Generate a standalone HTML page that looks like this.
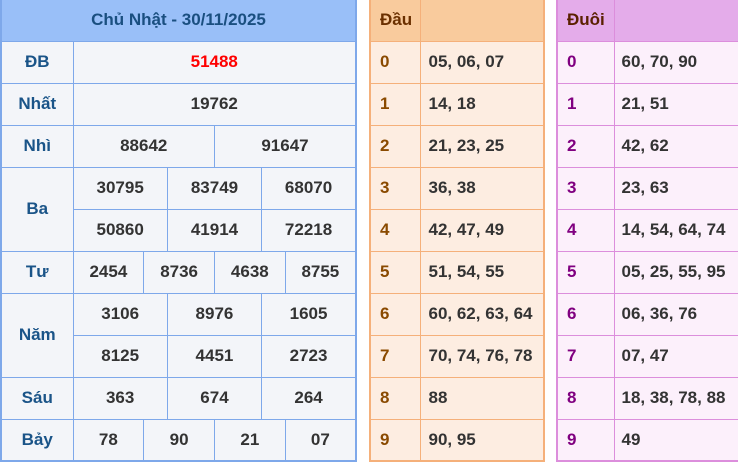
<!DOCTYPE html>
<html><head><meta charset="utf-8"><style>
*{margin:0;padding:0;box-sizing:border-box}
body{width:738px;height:461px;overflow:hidden;background:#fff;font-family:"Liberation Sans",Arial,sans-serif;font-weight:bold;font-size:17px;color:#333}
table{position:absolute;top:-2px;border-collapse:collapse;table-layout:fixed}
td{height:42px;text-align:center;vertical-align:middle;padding:0}
#L{left:0;width:357px;border:2px solid #7ea8ea}
#L td{border:1px solid #7ea8ea;background:#f3f5f9}
#L th{height:42px;background:#99bff8;color:#1a4f80;border:1px solid #7ea8ea;font-size:17px}
#L td.l{color:#1a5488}
.red{color:#f00}
#D{left:369px;width:176px;border:2px solid #f5b07a}
#D td,#D th{border:1px solid #f5b07a;background:#fdede1;text-align:left;padding-left:8px}
#D th{background:#f9cb9d;color:#6b3000;height:42px;font-size:17px}
#D td.l{color:#8a4a00;padding-left:9px}
#U{left:556px;width:200px;border:2px solid #dc8edc}
#U td,#U th{border:1px solid #dc8edc;background:#fcf0fb;text-align:left;padding-left:7px}
#U th{background:#e4acea;color:#5a2000;height:42px;font-size:17px}
#U td.l{color:#800080;padding-left:9px}
</style></head><body>
<table id="L">
<colgroup><col style="width:72px"><col span="12"></colgroup>
<tr><th colspan="13">Chủ Nhật - 30/11/2025</th></tr>
<tr><td class="l">ĐB</td><td colspan="12" class="red">51488</td></tr>
<tr><td class="l">Nhất</td><td colspan="12">19762</td></tr>
<tr><td class="l">Nhì</td><td colspan="6">88642</td><td colspan="6">91647</td></tr>
<tr><td class="l" rowspan="2">Ba</td><td colspan="4">30795</td><td colspan="4">83749</td><td colspan="4">68070</td></tr>
<tr><td colspan="4">50860</td><td colspan="4">41914</td><td colspan="4">72218</td></tr>
<tr><td class="l">Tư</td><td colspan="3">2454</td><td colspan="3">8736</td><td colspan="3">4638</td><td colspan="3">8755</td></tr>
<tr><td class="l" rowspan="2">Năm</td><td colspan="4">3106</td><td colspan="4">8976</td><td colspan="4">1605</td></tr>
<tr><td colspan="4">8125</td><td colspan="4">4451</td><td colspan="4">2723</td></tr>
<tr><td class="l">Sáu</td><td colspan="4">363</td><td colspan="4">674</td><td colspan="4">264</td></tr>
<tr><td class="l">Bảy</td><td colspan="3">78</td><td colspan="3">90</td><td colspan="3">21</td><td colspan="3">07</td></tr>
</table>
<table id="D">
<colgroup><col style="width:50px"><col></colgroup>
<tr><th style="padding-left:9px">Đầu</th><th></th></tr>
<tr><td class="l">0</td><td>05, 06, 07</td></tr>
<tr><td class="l">1</td><td>14, 18</td></tr>
<tr><td class="l">2</td><td>21, 23, 25</td></tr>
<tr><td class="l">3</td><td>36, 38</td></tr>
<tr><td class="l">4</td><td>42, 47, 49</td></tr>
<tr><td class="l">5</td><td>51, 54, 55</td></tr>
<tr><td class="l">6</td><td>60, 62, 63, 64</td></tr>
<tr><td class="l">7</td><td>70, 74, 76, 78</td></tr>
<tr><td class="l">8</td><td>88</td></tr>
<tr><td class="l">9</td><td>90, 95</td></tr>
</table>
<table id="U">
<colgroup><col style="width:57px"><col></colgroup>
<tr><th style="padding-left:9px">Đuôi</th><th></th></tr>
<tr><td class="l">0</td><td>60, 70, 90</td></tr>
<tr><td class="l">1</td><td>21, 51</td></tr>
<tr><td class="l">2</td><td>42, 62</td></tr>
<tr><td class="l">3</td><td>23, 63</td></tr>
<tr><td class="l">4</td><td>14, 54, 64, 74</td></tr>
<tr><td class="l">5</td><td>05, 25, 55, 95</td></tr>
<tr><td class="l">6</td><td>06, 36, 76</td></tr>
<tr><td class="l">7</td><td>07, 47</td></tr>
<tr><td class="l">8</td><td>18, 38, 78, 88</td></tr>
<tr><td class="l">9</td><td>49</td></tr>
</table>
</body></html>
